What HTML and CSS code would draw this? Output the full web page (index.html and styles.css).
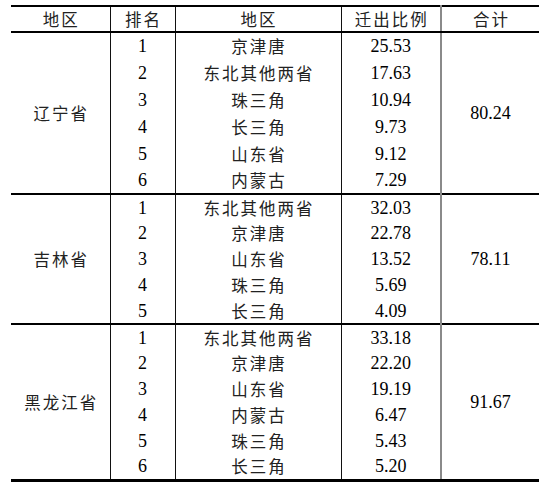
FILE: index.html
```html
<!DOCTYPE html>
<html lang="zh">
<head>
<meta charset="utf-8">
<link rel="stylesheet" href="styles.css">
</head>
<body>
<table class="tbl">
  <colgroup>
    <col class="c1"><col class="c2"><col class="c3"><col class="c4"><col class="c5">
  </colgroup>
  <thead>
    <tr><th class="zh">地区</th><th class="zh">排名</th><th class="zh">地区</th><th class="zh num">迁出比例</th><th class="zh tot">合计</th></tr>
  </thead>
  <tbody class="grp g1">
    <tr><td rowspan="6" class="zh">辽宁省</td><td>1</td><td class="zh">京津唐</td><td class="num">25.53</td><td rowspan="6" class="tot">80.24</td></tr>
    <tr><td>2</td><td class="zh">东北其他两省</td><td class="num">17.63</td></tr>
    <tr><td>3</td><td class="zh">珠三角</td><td class="num">10.94</td></tr>
    <tr><td>4</td><td class="zh">长三角</td><td class="num">9.73</td></tr>
    <tr><td>5</td><td class="zh">山东省</td><td class="num">9.12</td></tr>
    <tr><td>6</td><td class="zh">内蒙古</td><td class="num">7.29</td></tr>
  </tbody>
  <tbody class="grp">
    <tr><td rowspan="5" class="zh">吉林省</td><td>1</td><td class="zh">东北其他两省</td><td class="num">32.03</td><td rowspan="5" class="tot">78.11</td></tr>
    <tr><td>2</td><td class="zh">京津唐</td><td class="num">22.78</td></tr>
    <tr><td>3</td><td class="zh">山东省</td><td class="num">13.52</td></tr>
    <tr><td>4</td><td class="zh">珠三角</td><td class="num">5.69</td></tr>
    <tr><td>5</td><td class="zh">长三角</td><td class="num">4.09</td></tr>
  </tbody>
  <tbody class="grp last">
    <tr><td rowspan="6" class="zh">黑龙江省</td><td>1</td><td class="zh">东北其他两省</td><td class="num">33.18</td><td rowspan="6" class="tot">91.67</td></tr>
    <tr><td>2</td><td class="zh">京津唐</td><td class="num">22.20</td></tr>
    <tr><td>3</td><td class="zh">山东省</td><td class="num">19.19</td></tr>
    <tr><td>4</td><td class="zh">内蒙古</td><td class="num">6.47</td></tr>
    <tr><td>5</td><td class="zh">珠三角</td><td class="num">5.43</td></tr>
    <tr><td>6</td><td class="zh">长三角</td><td class="num">5.20</td></tr>
  </tbody>
</table>
</body>
</html>
```
FILE: styles.css
```css
html, body {
  margin: 0;
  padding: 0;
  background: #fff;
}
body {
  padding: 5px 0 0 11px;
}
.tbl {
  border-collapse: collapse;
  table-layout: fixed;
  width: 528px;
  font-family: "Liberation Serif", "Noto Sans CJK SC", serif;
  font-size: 18px;
  color: #000;
}
.c1 { width: 99px; }
.c2 { width: 65px; }
.c3 { width: 166px; }
.c4 { width: 100px; }
.c5 { width: 98px; }
.tbl th, .tbl td {
  padding: 0;
  text-align: center;
  vertical-align: middle;
  font-weight: normal;
  line-height: 20px;
  border-right: 1px solid #111;
}
.tbl .num {
  border-right: 2px solid #8a8a8a;
}
.tbl .tot {
  border-right: none;
}
.tbl tr { height: 26px; }
.tbl .g1 tr { height: 27px; }
.tbl thead th {
  border-top: 2px solid #000;
  border-bottom: 2px solid #000;
}
.grp {
  border-bottom: 2px solid #000;
}
.grp.last {
  border-bottom: 3px solid #000;
}
.zh {
  font-family: "Noto Sans CJK SC", sans-serif;
  font-size: 16.5px;
  font-weight: 300;
  letter-spacing: 2px;
  text-indent: 2px;
  color: #222;
}
```
